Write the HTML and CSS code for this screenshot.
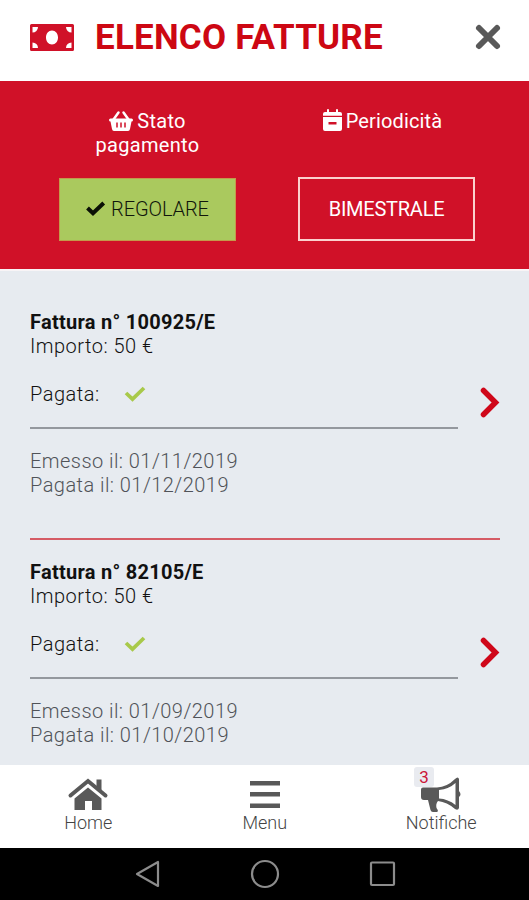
FILE: index.html
```html
<!DOCTYPE html>
<html lang="it">
<head>
<meta charset="utf-8">
<title>Elenco fatture</title>
<link rel="stylesheet" href="styles.css">
</head>
<body>
<header class="header">
  <svg class="money" viewBox="0 0 44 27"><path fill-rule="evenodd" d="M1.500 0H42.500Q44 0 44 1.500V25.500Q44 27 42.500 27H1.500Q0 27 0 25.500V1.500Q0 0 1.500 0ZM2.500 3V8.500A5.500 5.500 0 0 0 8 3ZM36 3A5.500 5.500 0 0 0 41.500 8.500V3ZM2.500 18.500V24H8A5.500 5.500 0 0 0 2.500 18.500ZM41.500 18.500A5.500 5.500 0 0 0 36 24H41.500ZM22 6.500C18.500 6.500 16 9.600 16 13.500S18.500 20.500 22 20.500S28 17.400 28 13.500S25.500 6.500 22 6.500Z"/></svg>
  <h1 class="title">ELENCO FATTURE</h1>
  <svg class="close" viewBox="0 0 26 26"><path d="M4 4L22 22M22 4L4 22"/></svg>
</header>
<section class="summary">
  <div class="column">
    <div class="label"><svg class="basket" viewBox="0 0 24 20"><path d="M1.500 7.500H22.500Q24 7.500 24 9T22.500 10.500L21 18Q20.700 20 19 20H5Q3.300 20 3 18L1.500 10.500Q0 10.500 0 9T1.500 7.500Z"/><path class="handle" d="M4.500 8.500L9.500 1.500M19.500 8.500L14.500 1.500"/><path class="slots" d="M8 11.500V16.500M12 11.500V16.500M16 11.500V16.500"/></svg>Stato<br>pagamento</div>
    <div class="button regular"><svg class="btn-check" viewBox="0 0 19 15"><path d="M1.500 7L7 12.300L17.700 2"/></svg>REGOLARE</div>
  </div>
  <div class="column">
    <div class="label period"><svg class="calendar" viewBox="0 0 19 22"><path fill-rule="evenodd" d="M2 3H4V1Q4 0 5 0T6 1V3H13V1Q13 0 14 0T15 1V3H17Q19 3 19 5V6.800H0V5Q0 3 2 3ZM0 8H19V20Q19 22 17 22H2Q0 22 0 20ZM5.500 13V15.500H13.500V13Z"/></svg>Periodicità</div>
    <div class="button outlined">BIMESTRALE</div>
  </div>
</section>
<main class="list">
  <article class="invoice">
    <div class="main-row">
      <div class="details"><div class="number">Fattura n° 100925/E</div><div class="amount">Importo: 50 €</div>
        <div class="paid"><span class="pagata">Pagata:</span><svg class="check" viewBox="0 0 22 16"><path d="M2 7L8.500 13.200L20 2"/></svg></div></div>
      <svg class="chevron" viewBox="0 0 20 31"><path d="M3.500 3.500L15.500 15.500L3.500 27.500"/></svg>
    </div>
    <div class="dates">Emesso il: 01/11/2019<br>Pagata il: 01/12/2019</div>
  </article>
  <article class="invoice">
    <div class="main-row">
      <div class="details"><div class="number">Fattura n° 82105/E</div><div class="amount">Importo: 50 €</div>
        <div class="paid"><span class="pagata">Pagata:</span><svg class="check" viewBox="0 0 22 16"><path d="M2 7L8.500 13.200L20 2"/></svg></div></div>
      <svg class="chevron" viewBox="0 0 20 31"><path d="M3.500 3.500L15.500 15.500L3.500 27.500"/></svg>
    </div>
    <div class="dates">Emesso il: 01/09/2019<br>Pagata il: 01/10/2019</div>
  </article>
</main>
<nav class="tabs">
  <div class="tab"><svg class="tab-icon" viewBox="0 0 40 34"><path d="M20 9.500L33.500 20.500V32H24V23H17V32H6.500V20.500Z"/><path class="roof" d="M2.500 17.500L20 3L37.500 17.500"/><path d="M28.500 1.500H33.500V15L28.500 11Z"/></svg><span>Home</span></div>
  <div class="tab"><svg class="tab-icon" viewBox="0 0 40 34"><path d="M5 3H35V7.500H5ZM5 14H35V18.500H5ZM5 25.500H35V30H5Z"/></svg><span>Menu</span></div>
  <div class="tab"><svg class="tab-icon" viewBox="0 0 40 34"><path fill-rule="evenodd" d="M2 9.500Q0 9.500 0 11.500V19Q0 22 3 22H7L9.500 32Q10 34 12 34H16Q18 33 15.500 30Q14.500 26 17 23Q26 24 34 31Q37 33 38 30V19Q41 16.500 38 13V1Q37 -2 34 1Q26 9 16 9.500ZM18 12Q28 11 34.500 5V27Q27 21 18 20.500Z"/></svg><span class="badge">3</span><span>Notifiche</span></div>
</nav>
<footer class="system">
  <svg class="sys-icon" viewBox="0 0 30 30"><path d="M5 15L26 3V27Z"/></svg>
  <svg class="sys-icon" viewBox="0 0 30 30"><circle cx="15" cy="15" r="13"/></svg>
  <svg class="sys-icon" viewBox="0 0 30 30"><rect x="3" y="3.500" width="23" height="22.500" rx="1"/></svg>
</footer>
</body>
</html>
```
FILE: styles.css
```css
* { box-sizing: border-box; }
body { margin: 0; width: 529px; height: 900px; overflow: hidden; display: flex; flex-direction: column; font: 300 20px/24px Roboto, "Liberation Sans", sans-serif; color: #111; background: #e7ebf0; }
svg { display: block; flex: none; overflow: visible; }
.header { height: 81px; flex: none; background: #fff; display: flex; align-items: center; padding: 0 28px 7px 30px; }
.money { width: 44px; height: 27px; fill: #d01128; }
.title { margin: 2px 0 0 21px; flex: 1; font-size: 35px; line-height: 42px; font-weight: 700; letter-spacing: .2px; color: #cd0713; white-space: nowrap; }
.close { width: 26px; height: 26px; fill: none; stroke: #595959; stroke-width: 6; stroke-linecap: round; }
.summary { height: 190px; flex: none; background: #d01128; border-bottom: 2px solid #f8f4f6; display: grid; grid-template-columns: 177px 177px; column-gap: 62px; padding: 28px 0 0 59px; }
.column { display: grid; grid-template-rows: 68px 64px; }
.label { text-align: center; color: #fff; font-weight: 400; letter-spacing: .3px; white-space: nowrap; }
.label svg { display: inline-block; fill: #fff; margin-right: 4px; }
.period { padding-right: 8px; letter-spacing: .15px; }
.basket { width: 24px; height: 20px; vertical-align: -3px; }
.handle { fill: none; stroke: #fff; stroke-width: 2.5; stroke-linecap: round; }
.slots { stroke: #d01128; stroke-width: 1.5; }
.calendar { width: 19px; height: 22px; vertical-align: -3px; }
.button { height: 64px; display: flex; align-items: center; justify-content: center; }
.regular { background: #aac95e; border: 1px solid #c39a4b; color: #10160b; letter-spacing: -.1px; height: 63px; margin-top: 1px; padding-bottom: 2px; }
.outlined { border: 2px solid #fbd1ce; color: #fff; font-weight: 400; letter-spacing: -.25px; padding-bottom: 1px; }
.btn-check { width: 19px; height: 15px; fill: none; stroke: #0b1006; stroke-width: 4; margin-right: 6px; }
.list { flex: 1; min-height: 0; overflow: hidden; padding: 39px 29px 0 30px; }
.invoice { height: 230px; border-bottom: 2px solid #d55b65; margin-bottom: 20px; }
.main-row { display: flex; justify-content: space-between; }
.details { width: 428px; height: 119px; border-bottom: 2px solid #94989e; }
.number { font-weight: 700; letter-spacing: .27px; }
.amount { letter-spacing: .48px; }
.paid { margin-top: 24px; display: flex; align-items: center; letter-spacing: .5px; }
.pagata { width: 94px; }
.check { width: 22px; height: 16px; fill: none; stroke: #a8c94a; stroke-width: 3.7; }
.chevron { width: 20px; height: 31px; margin-top: 77px; fill: none; stroke: #cf0719; stroke-width: 5.5; stroke-linecap: round; }
.dates { margin-top: 20px; color: #505358; letter-spacing: .45px; }
.tabs { height: 83px; flex: none; background: #fff; display: grid; grid-template-columns: repeat(3, 176.5px); }
.tab { position: relative; display: flex; flex-direction: column; align-items: center; padding-top: 13px; font-size: 18px; line-height: 22px; color: #444; }
.tab-icon { width: 40px; height: 34px; fill: #595959; }
.roof { fill: none; stroke: #595959; stroke-width: 4; stroke-linecap: round; }
.badge { position: absolute; left: 61px; top: 2px; width: 20px; height: 20px; border-radius: 3px; background: #e9ebf0; color: #cb1538; font-size: 17px; line-height: 20px; font-weight: 400; text-align: center; }
.system { height: 52px; flex: none; background: #000; display: flex; justify-content: center; align-items: center; gap: 88px; }
.sys-icon { width: 30px; height: 30px; fill: none; stroke: #8c8c8c; stroke-width: 2.2; stroke-linejoin: round; }
```
